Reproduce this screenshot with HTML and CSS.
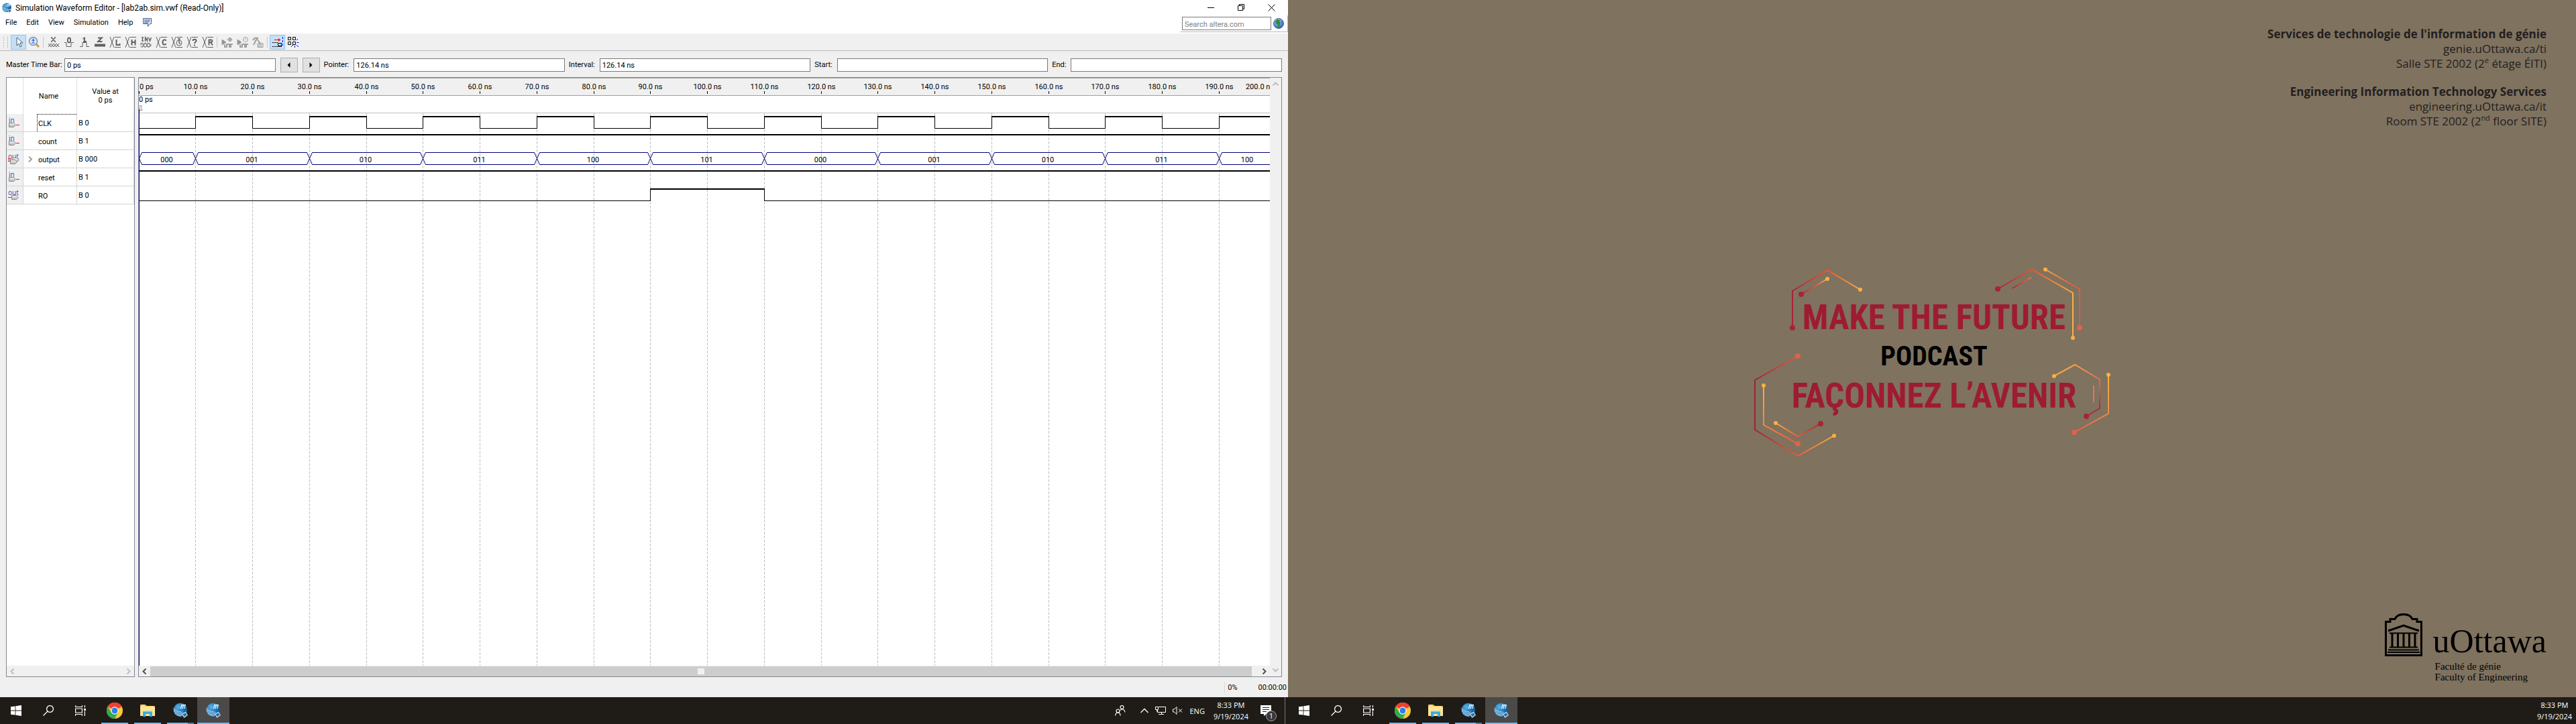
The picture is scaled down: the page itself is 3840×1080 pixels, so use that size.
FILE: index.html
```html
<!DOCTYPE html>
<html lang="en">
<head>
<meta charset="utf-8">
<title>Simulation Waveform Editor</title>
<link rel="stylesheet" href="styles.css">
</head>
<body>
<svg class="sprite" width="0" height="0" aria-hidden="true">
  <defs>
    <radialGradient id="ball" cx="35%" cy="30%" r="75%"><stop offset="0" stop-color="#5fb4e6"/><stop offset=".6" stop-color="#1573b4"/><stop offset="1" stop-color="#0c4a80"/></radialGradient>
    <radialGradient id="earth" cx="40%" cy="30%" r="70%"><stop offset="0" stop-color="#b9d4f7"/><stop offset="1" stop-color="#2c5fc0"/></radialGradient>
    <linearGradient id="pin" x1="0" y1="0" x2="0" y2="1"><stop offset="0" stop-color="#f4f4f4"/><stop offset="1" stop-color="#b4b4b4"/></linearGradient>
  </defs>
  <symbol id="i-quartus" viewBox="0 0 24 24">
    <circle cx="12" cy="11" r="10.300" fill="url(#ball)"/>
    <path d="M12.500 9l1.500-5M15 9l1.500-5M18 9l1-5M13 3.700h7" stroke="#fff" stroke-width="1.200" fill="none"/>
    <path d="M1.500 8.500c4 4 8 5.500 14 6M1.500 10.700c4 4 8 5.500 13 5.800M2 13c4 4 7 5 12 5.500M3.500 16c3 3 6 4 10 4" stroke="#e8f2fa" stroke-width=".9" fill="none"/>
    <path d="M13.500 17l6.500-3.500 3 5.500-5.500 4z" fill="#c3ced8"/><path d="M15.500 17.500l4-2 2 3-3.500 2.500z" fill="#1573b4"/>
  </symbol>
  <symbol id="i-win" viewBox="0 0 16 16"><path fill="#fff" d="M0 2.300L6.600 1.400V7.600H0zM7.400 1.300L16 0V7.600H7.400zM0 8.400H6.600V14.600L0 13.700zM7.400 8.400H16V16L7.400 14.700z"/></symbol>
  <symbol id="i-search" viewBox="0 0 16 16"><g fill="none" stroke="#fff" stroke-width="1.300"><circle cx="10.500" cy="5.500" r="4.900"/><path d="M7 9L.5 15.500"/></g></symbol>
  <symbol id="i-view" viewBox="0 0 16 16"><g fill="none" stroke="#fff" stroke-width="1.200"><path d="M.6 .3V2.500H10.400V.3M.6 15.700V13.500H10.400V15.700M.6 5H10.400V11H.6zM14.300 0V3.500M14.300 9V16"/></g><path fill="#fff" d="M13 5h3v3h-3z"/></symbol>
  <symbol id="i-chrome" viewBox="0 0 24 24">
    <circle cx="12" cy="12" r="12" fill="#fcc934"/>
    <path d="M12 12L1.600 6A12 12 0 0 1 22.400 6z" fill="#ea4335"/><path d="M12 6.500H22.700A12 12 0 0 0 1.600 6z" fill="#ea4335"/>
    <path d="M1.600 6A12 12 0 0 0 12 24L17 14.500 7 14.800z" fill="#34a853"/>
    <circle cx="12" cy="12" r="5.700" fill="#fff"/><circle cx="12" cy="12" r="4.500" fill="#2f7de9"/>
  </symbol>
  <symbol id="i-folder" viewBox="0 0 22 20"><path fill="#f3b93a" d="M0 1h8l1.500 2H20v4H0z"/><path fill="#fff" d="M2 1.500h4v1H2z"/><path fill="#ffe694" d="M0 3.500H22V18H0z"/><path fill="#3aa9e0" d="M4 11h14v8h-4v-4H8v4H4z"/><path fill="#7ccbf0" d="M4 10.500h14v1.500H4z"/></symbol>
  <symbol id="i-in" viewBox="0 0 18 20"><path d="M1.500 11.500h7l3 3-3 3h-7z" fill="url(#pin)" stroke="#8a8a8a"/><path d="M12 14.500h5" stroke="#e02020"/></symbol>
  <symbol id="i-out" viewBox="0 0 18 20"><path d="M5.500 11.500h7l3 3-3 3h-7z" fill="url(#pin)" stroke="#8a8a8a"/><path d="M0 14.500h5" stroke="#e02020"/></symbol>
  <symbol id="i-bus" viewBox="0 0 18 20"><path d="M6.500 9.500h7l3 3-3 3h-7z" fill="url(#pin)" stroke="#8a8a8a"/><path d="M3.500 12.500h7l3 3-3 3h-7z" fill="url(#pin)" stroke="#8a8a8a"/><path d="M0 10.500h5M0 12.500h4M0 14.500h3" stroke="#e02020"/></symbol>
</svg>

<section class="monitor">
  <main class="window">
    <header class="titlebar">
      <svg width="16" height="16"><use href="#i-quartus"/></svg>
      <h1>Simulation Waveform Editor - [lab2ab.sim.vwf (Read-Only)]</h1>
      <button aria-label="Minimize"><svg width="11" height="11"><path d="M0 5.500h10" stroke="#000"/></svg></button>
      <button aria-label="Restore"><svg width="11" height="11"><path d="M.5 2.500h7v7h-7zM2.500 2.500v-2h7v7h-2" fill="none" stroke="#000"/></svg></button>
      <button aria-label="Close"><svg width="11" height="11"><path d="M.5 .5l10 10M10.500 .5l-10 10" stroke="#000"/></svg></button>
    </header>

    <nav class="menubar">
      <button>File</button><button>Edit</button><button>View</button><button>Simulation</button><button>Help</button>
      <button aria-label="Feedback"><svg width="15" height="14"><path d="M1.500 .5h12v8h-2l-3 4v-4h-7z" fill="#dce8f8" stroke="#4a5f8c"/><path d="M3 3h9M3 5h8M3 7h6" stroke="#4a5f8c"/></svg></button>
      <form class="search">
        <input type="search" aria-label="Search altera.com" placeholder="Search altera.com">
        <button type="button" aria-label="Search the web"><svg width="16" height="16"><circle cx="8" cy="8" r="7.500" fill="url(#earth)" stroke="#3a5fa8"/><path d="M3 5l3-3 4 1-1 2 2 1-1 3-1 4-2 1V10L4 8z" fill="#2f8a3a"/><path d="M12 4l2 2-1 2z" fill="#2f8a3a"/></svg></button>
      </form>
    </nav>

    <div class="toolbar">
      <span class="grip"></span>
      <button class="on" aria-label="Select"><svg width="18" height="18"><path d="M6 2v12l3-3 2 5 2-1-2-5h4z" fill="#fff" stroke="#4a5a70"/></svg></button>
      <button aria-label="Zoom"><svg width="18" height="18"><path d="M11.500 11.500l4.500 4.500" stroke="#d69a3c" stroke-width="3"/><circle cx="7.500" cy="7.500" r="6" fill="#dcebfa" stroke="#6d92c4" stroke-width="1.500"/><path d="M5 6h5M7.500 3.500v5M5 10h5" stroke="#2544b0"/></svg></button>
      <i></i>
      <button aria-label="Force unknown"><svg width="18" height="18"><path d="M5.500 2l6 6M11.500 2l-6 6M5 2h2M10 2h2M5 8h2M10 8h2" stroke-width="1.500"/><path d="M1 11l4 5 4-5 4 5 4-5M1 16l4-5 4 5 4-5 4 5"/></svg></button>
      <button aria-label="Force low"><svg width="18" height="18"><path d="M2 9.500h3v6h7v-6h4"/><ellipse cx="9" cy="6" rx="2.200" ry="3.500" stroke-width="1.800"/></svg></button>
      <button aria-label="Force high"><svg width="18" height="18"><path d="M2 15.500h4v-6h6v6h4"/><path d="M6.500 4l2.500-1.500V8M7 8h5" stroke-width="1.800"/></svg></button>
      <button aria-label="High impedance"><svg width="18" height="18"><path d="M6 2.500h6l-6 5.500h6.500" stroke-width="1.800"/><path d="M1 13.500h16" stroke-width="4"/></svg></button>
      <button aria-label="Weak low"><svg width="18" height="18"><path d="M1 1l6 16M7 1L1 17M17 1.500H8M17 16.500H8"/><path d="M10.500 5v8h5v-2" stroke-width="2"/></svg></button>
      <button aria-label="Weak high"><svg width="18" height="18"><path d="M1 1l6 16M7 1L1 17M17 1.500H8M17 16.500H8"/><path d="M10.500 5v8.500M15.500 5v8.500M10 9h6" stroke-width="2"/></svg></button>
      <button aria-label="Invert"><svg width="18" height="18"><path d="M3.500 1.500v6M2 2h3M2 7h3M7.500 8V2l3 5V1.500M12.500 2l2 5 2-5" stroke-width="1.400"/><path d="M1 14v-3.500h3V13h2v-2.500h3V13h2v-2.500h3V13h3M1 16h3v-1.500h2V16h3v-1.500h2V16h3v-1.500h2"/></svg></button>
      <button aria-label="Count value"><svg width="18" height="18"><path d="M1 1l6 16M7 1L1 17M17 1.500H8M17 16.500H8"/><path d="M15.500 7c-1-2.500-5-2.500-5 2s4 4.500 5 2" stroke-width="2"/></svg></button>
      <button aria-label="Overwrite clock"><svg width="18" height="18"><path d="M1 1l6 16M7 1L1 17M17 1.500H8M17 16.500H8"/><circle cx="12" cy="10" r="4"/><path d="M12 3.500V10l2 1.500M10 4h4" stroke-width="1.500"/></svg></button>
      <button aria-label="Arbitrary value"><svg width="18" height="18"><path d="M1 1l6 16M7 1L1 17M17 1.500H8M17 16.500H8"/><path d="M9.500 7c0-3 5-3 5 0 0 2-2.500 1.500-2.500 4M12 12.500v2" stroke-width="2"/></svg></button>
      <button aria-label="Random values"><svg width="18" height="18"><path d="M1 1l6 16M7 1L1 17M17 1.500H8M17 16.500H8"/><path d="M10.500 13.500V5.500h3c2.500 0 2.500 3.500 0 3.500h-2.500M13 9l3 4.500" stroke-width="1.800"/></svg></button>
      <i></i>
      <button aria-label="Functional simulation" disabled><svg width="18" height="18"><path d="M1 5l6 4-6 4z" fill="#909090"/><path d="M8 5h3M11 2.500v5h3l2-2.500-2-2.500z" fill="#b0b0b0"/><path d="M5 12v4h3v-4h4v4h2v-4h3" stroke-width="2"/></svg></button>
      <button aria-label="Timing simulation" disabled><svg width="18" height="18"><path d="M1 5l6 4-6 4z" fill="#909090"/><circle cx="13" cy="5" r="3.500"/><path d="M13 3v2.500"/><path d="M5 12v4h3v-4h4v4h2v-4h3" stroke-width="2"/></svg></button>
      <button aria-label="Generate testbench" disabled><svg width="18" height="18"><path d="M1 6c2-4 5-4 8-3M6 3l7 9M2 13l4-8" stroke-width="2"/><path d="M8 10.500h8v6H8zM10 16v-4h3v4" fill="#ddd"/></svg></button>
      <i></i>
      <button class="on" aria-label="Snap to transition"><svg width="18" height="18"><path d="M4 5.500h9" stroke="#f00"/><path d="M10 3l3 2.500L10 8z" fill="#f00" stroke="none"/><path d="M1 9.500h8M1 15.500h15" stroke="#000" stroke-dasharray="2 1"/><path d="M9.500 10.500h5v4h-5z" stroke="#000"/><path d="M16.500 1v15" stroke="#00f" stroke-dasharray="3 2"/></svg></button>
      <button aria-label="Snap to grid"><svg width="18" height="18"><path d="M1.500 1.500h4v4h-4zM8.500 1.500h4v4h-4zM1.500 8.500h4v4h-4zM8.500 8.500h4v4h-4z" stroke="#000" stroke-width="1"/><path d="M14 6l2-2M14.500 9.500h3M14 13l3 3M11.500 14v3M9 13l-3 3" stroke="#00f"/></svg></button>
    </div>

    <div class="workspace">
      <form class="timebar">
        <label for="master">Master Time Bar:</label><input id="master" value="0 ps">
        <button type="button" aria-label="Previous transition"><svg width="5" height="8"><path d="M4.500 0v8L.5 4z"/></svg></button>
        <button type="button" aria-label="Next transition"><svg width="5" height="8"><path d="M.5 0v8l4-4z"/></svg></button>
        <label for="pointer">Pointer:</label><input id="pointer" value="126.14 ns">
        <label for="interval">Interval:</label><input id="interval" value="126.14 ns">
        <label for="start">Start:</label><input id="start">
        <label for="end">End:</label><input id="end">
      </form>

      <div class="panes">
        <section class="pane signals">
          <table>
            <thead><tr><th class="dir"></th><th class="name">Name</th><th class="value">Value at<br>0 ps</th></tr></thead>
            <tbody>
              <tr><td class="dir"><svg width="18" height="22"><text x="1" y="11">in</text><use href="#i-in" width="18" height="20"/></svg></td><td class="name"><span class="focused">CLK</span></td><td class="value">B 0</td></tr>
              <tr><td class="dir"><svg width="18" height="22"><text x="1" y="11">in</text><use href="#i-in" width="18" height="20"/></svg></td><td class="name"><span>count</span></td><td class="value">B 1</td></tr>
              <tr><td class="dir"><svg width="18" height="22"><text x="0" y="11">out</text><use href="#i-bus" width="18" height="20"/></svg></td><td class="name bus"><svg class="expander" width="7" height="9"><path d="M1 .5l4 4-4 4"/></svg><span>output</span></td><td class="value">B 000</td></tr>
              <tr><td class="dir"><svg width="18" height="22"><text x="1" y="11">in</text><use href="#i-in" width="18" height="20"/></svg></td><td class="name"><span>reset</span></td><td class="value">B 1</td></tr>
              <tr><td class="dir"><svg width="18" height="22"><text x="0" y="11">out</text><use href="#i-out" width="18" height="20"/></svg></td><td class="name"><span>RO</span></td><td class="value">B 0</td></tr>
            </tbody>
          </table>
          <div class="hscroll off">
            <svg width="7" height="9"><path d="M5.500 .5l-4 4 4 4"/></svg>
            <svg width="7" height="9"><path d="M1.500 .5l4 4-4 4"/></svg>
          </div>
        </section>

        <section class="pane waves">
          <div class="plot">
            <svg id="chart" width="100%" height="100%"></svg>
            <div class="hscroll">
              <svg width="7" height="9"><path d="M5.500 .5l-4 4 4 4"/></svg>
              <div class="thumb"><span></span></div>
              <svg width="7" height="9"><path d="M1.500 .5l4 4-4 4"/></svg>
            </div>
          </div>
          <div class="vscroll">
            <svg width="9" height="7"><path d="M.5 5.500l4-4 4 4"/></svg>
            <svg width="9" height="7"><path d="M.5 1.500l4 4 4-4"/></svg>
          </div>
        </section>
      </div>
    </div>

    <footer class="statusbar"><span>0%</span><span>00:00:00</span></footer>
  </main>

  <footer class="taskbar">
    <button aria-label="Start"><svg width="16" height="16"><use href="#i-win"/></svg></button>
    <button aria-label="Search"><svg width="16" height="16"><use href="#i-search"/></svg></button>
    <button aria-label="Task View"><svg width="16" height="16"><use href="#i-view"/></svg></button>
    <div class="apps">
      <button class="open" aria-label="Google Chrome"><svg width="24" height="24"><use href="#i-chrome"/></svg></button>
      <button class="open" aria-label="File Explorer"><svg width="22" height="20"><use href="#i-folder"/></svg></button>
      <button class="open many" aria-label="Quartus"><svg width="24" height="24"><use href="#i-quartus"/></svg></button>
      <button class="active" aria-label="Simulation Waveform Editor"><svg width="24" height="24"><use href="#i-quartus"/></svg></button>
    </div>
    <div class="tray">
      <svg width="16" height="16"><g fill="none" stroke="#fff" stroke-width="1.200"><circle cx="10.500" cy="3" r="2.500"/><circle cx="4.500" cy="8.500" r="2.500"/><path d="M.7 15.500c.5-6 7-6 7.500 0M8 7.500c3-3 6.500-1.500 7 3"/></g></svg>
      <svg width="12" height="8"><path d="M.5 7l5.500-5.500L11.500 7" fill="none" stroke="#fff" stroke-width="1.300"/></svg>
      <svg width="16" height="14"><g fill="none" stroke="#fff"><path d="M5 1.500h10.500v8H3.500V6M9.500 9.500v3M5 12.500h8M.5 1.500h4v4h-4zM2.500 5.500v3"/></g></svg>
      <svg width="15" height="12"><g fill="none" stroke="#fff"><path d="M.5 4v4h2l3.500 3.500v-11L2.500 4zM9 3.500l5 5M14 3.500l-5 5"/></g></svg>
      <span>ENG</span>
      <time>8:33 PM<br>9/19/2024</time>
      <span class="notes"><svg width="16" height="16"><path fill="#fff" d="M0 0h16v13H9l-4 3v-3H0z"/><path d="M3 3.500h10M3 6.500h10M3 9.500h6" stroke="#1f1c18"/></svg><b>1</b></span>
      <span class="peek"></span>
    </div>
  </footer>
</section>

<section class="monitor">
  <div class="wallpaper">
    <address>
      <p><strong>Services de technologie de l'information de génie</strong><br>genie.uOttawa.ca/ti<br>Salle STE 2002 (2<sup>e</sup> étage ÉITI)</p>
      <p><strong>Engineering Information Technology Services</strong><br>engineering.uOttawa.ca/it<br>Room STE 2002 (2<sup>nd</sup> floor SITE)</p>
    </address>

    <svg class="podcast" width="560" height="320" viewBox="0 0 560 320">
      <defs>
        <linearGradient id="g1" gradientUnits="userSpaceOnUse" x1="72" y1="0" x2="173" y2="0"><stop offset="0" stop-color="#a82338"/><stop offset=".5" stop-color="#f05030"/><stop offset="1" stop-color="#fbb040"/></linearGradient>
        <linearGradient id="g2" gradientUnits="userSpaceOnUse" x1="85" y1="0" x2="124" y2="0"><stop offset="0" stop-color="#a82338"/><stop offset=".6" stop-color="#e85a3c"/><stop offset="1" stop-color="#fbb860"/></linearGradient>
        <linearGradient id="g3" gradientUnits="userSpaceOnUse" x1="378" y1="0" x2="490" y2="0"><stop offset="0" stop-color="#a82338"/><stop offset=".5" stop-color="#f05a35"/><stop offset="1" stop-color="#fbb040"/></linearGradient>
        <linearGradient id="g4" gradientUnits="userSpaceOnUse" x1="449" y1="22" x2="500" y2="70"><stop offset="0" stop-color="#fbb040"/><stop offset=".6" stop-color="#e8603c"/><stop offset="1" stop-color="#d45a50"/></linearGradient>
        <linearGradient id="g5" gradientUnits="userSpaceOnUse" x1="16" y1="0" x2="134" y2="0"><stop offset="0" stop-color="#a02038"/><stop offset=".5" stop-color="#e8553a"/><stop offset="1" stop-color="#fbb040"/></linearGradient>
        <linearGradient id="g6" gradientUnits="userSpaceOnUse" x1="29" y1="195" x2="80" y2="282"><stop offset="0" stop-color="#fbb040"/><stop offset="1" stop-color="#e85a3c"/></linearGradient>
        <linearGradient id="g7" gradientUnits="userSpaceOnUse" x1="47" y1="0" x2="114" y2="0"><stop offset="0" stop-color="#fbb040"/><stop offset=".5" stop-color="#e85a3c"/><stop offset="1" stop-color="#a82338"/></linearGradient>
        <linearGradient id="g8" gradientUnits="userSpaceOnUse" x1="470" y1="165" x2="520" y2="240"><stop offset="0" stop-color="#fbb040"/><stop offset=".6" stop-color="#e06a50"/><stop offset="1" stop-color="#a82338"/></linearGradient>
        <linearGradient id="g9" gradientUnits="userSpaceOnUse" x1="543" y1="179" x2="500" y2="265"><stop offset="0" stop-color="#fbb040"/><stop offset="1" stop-color="#e0624a"/></linearGradient>
      </defs>
      <g fill="none" stroke-width="2">
        <path stroke="url(#g1)" d="M72 109V54l52-31 49 29"/>
        <path stroke="url(#g2)" d="M85 59l39-23"/>
        <path stroke="url(#g3)" d="M378 51l51-29 61 35v67"/>
        <path stroke="url(#g2)" transform="translate(314 -1)" d="M86 51l28-16"/>
        <path stroke="url(#g4)" d="M449 22l51 29v58"/>
        <path stroke="url(#g5)" d="M80 151l-64 36v74l64 39 54-30"/>
        <path stroke="url(#g6)" d="M29 195v59l51 28"/>
        <path stroke="url(#g7)" d="M47 251l33 20 34-19"/>
        <path stroke="url(#g8)" d="M462 181l31-17 37 22v43l-20 12"/>
        <path stroke="url(#g9)" d="M543 179v58l-51 28"/>
        <path stroke="#e8764a" d="M521 195v25"/>
      </g>
      <g fill="#a82338"><circle cx="72" cy="109" r="4"/><circle cx="85" cy="59" r="4"/><circle cx="378" cy="51" r="4"/><circle cx="114" cy="252" r="4"/><circle cx="510" cy="241" r="4"/></g>
      <g fill="#e0624a"><circle cx="500" cy="109" r="4"/><circle cx="80" cy="151" r="4"/><circle cx="80" cy="282" r="4"/><circle cx="492" cy="265" r="4"/></g>
      <g fill="#fbb040"><circle cx="124" cy="36" r="3"/><circle cx="173" cy="52" r="3"/><circle cx="449" cy="22" r="3"/><circle cx="490" cy="124" r="3"/><circle cx="29" cy="195" r="3"/><circle cx="47" cy="251" r="3"/><circle cx="134" cy="270" r="3"/><circle cx="462" cy="181" r="3"/><circle cx="543" cy="179" r="3"/></g>
      <g class="slogan" text-anchor="middle">
        <text x="283" y="111">MAKE THE FUTURE</text>
        <text class="small" x="283" y="165">PODCAST</text>
        <text x="283" y="228">FAÇONNEZ L’AVENIR</text>
      </g>
    </svg>

    <div class="brand">
      <svg width="56" height="64" fill="none" stroke="#000"><path stroke-width="3" d="M1.500 62.500V12.500H8V8.500h7C19 -1 37 -1 41 8.500h7v4h6.500v50z"/><path stroke-width="3" d="M5 26l23-8 23 8"/><path stroke-width="2" d="M7 29.500h42M7 50.500h42M5 54.500h46M4 58h48"/><path stroke-width="3" d="M11 30v20M19.500 30v20M28 30v20M36.500 30v20M45 30v20"/></svg>
      <div>
        <p class="uottawa">uOttawa</p>
        <p class="faculty">Faculté de génie<br>Faculty of Engineering</p>
      </div>
    </div>
  </div>

  <footer class="taskbar">
    <button aria-label="Start"><svg width="16" height="16"><use href="#i-win"/></svg></button>
    <button aria-label="Search"><svg width="16" height="16"><use href="#i-search"/></svg></button>
    <button aria-label="Task View"><svg width="16" height="16"><use href="#i-view"/></svg></button>
    <div class="apps">
      <button class="open" aria-label="Google Chrome"><svg width="24" height="24"><use href="#i-chrome"/></svg></button>
      <button class="open" aria-label="File Explorer"><svg width="22" height="20"><use href="#i-folder"/></svg></button>
      <button class="open many" aria-label="Quartus"><svg width="24" height="24"><use href="#i-quartus"/></svg></button>
      <button class="active" aria-label="Simulation Waveform Editor"><svg width="24" height="24"><use href="#i-quartus"/></svg></button>
    </div>
    <div class="tray"><time class="last">8:33 PM<br>9/19/2024</time></div>
  </footer>
</section>
<script src="waveform.js"></script>
</body>
</html>
```

FILE: styles.css
```css
* { box-sizing: border-box; }

body {
  display: flex;
  margin: 0;
  min-height: 100vh;
  background: #7f725f;
  color: #000;
  font: 11px/13px Roboto, "Liberation Sans", sans-serif;
}

h1, p { margin: 0; }
svg { display: block; flex: none; }
.sprite { position: absolute; }

button {
  display: flex;
  align-items: center;
  justify-content: center;
  margin: 0;
  padding: 0;
  border: 0;
  background: none;
  color: inherit;
  font: inherit;
}

input {
  min-width: 0;
  height: 20px;
  padding: 2px 3px 0;
  border: 1px solid #7a7a7a;
  border-radius: 0;
  background: #fff;
  color: #000;
  font: inherit;
  appearance: none;
}

.monitor { display: flex; flex: 1; flex-direction: column; min-width: 0; }
.window { display: flex; flex: 1; flex-direction: column; background: #f0f0f0; }

/* Title and menu */
.titlebar { display: flex; align-items: center; height: 23px; padding: 0 2px; background: #fff; }
.titlebar h1 { flex: 1; padding-left: 5px; font: 12px/16px Roboto, sans-serif; }
.titlebar button { width: 45px; height: 20px; }

.menubar { display: flex; height: 28px; padding: 0 0 2px 8px; border-bottom: 1px solid #f0f0f0; background: #fff; }
.menubar > button { height: 21px; margin-right: 14px; }
.search { display: flex; align-items: center; gap: 3px; margin-left: auto; padding: 0 5px 0 2px; border: solid #b8b8b8; border-width: 0 1px 1px 0; }
.search input { width: 133px; }
.search input::placeholder { color: #808080; opacity: 1; }

/* Toolbar */
.toolbar { display: flex; align-items: center; height: 25px; border-bottom: 1px solid #b8b8b8; }
.toolbar button { width: 23px; height: 22px; border: 1px solid transparent; }
.toolbar button svg { fill: none; stroke: #606060; }
.toolbar button:disabled svg { stroke: #a0a0a0; }
.toolbar button.on { border-color: #90c8f6; background: #c5dff5; }
.toolbar i { width: 4px; height: 16px; margin-left: 2px; border-left: 1px solid #c8c8c8; }
.grip { width: 8px; height: 18px; margin: 0 4px; border-right: 1px solid #c8c8c8; background: radial-gradient(circle, #b4b4b4 1px, transparent 1px) 0 0 / 3px 4px repeat-y; }

/* Time fields */
.workspace { display: flex; flex: 1; flex-direction: column; padding: 0 9px; }
.timebar { display: flex; align-items: center; height: 39px; padding-top: 2px; }
.timebar input { flex: 1; }
.timebar label { flex: none; padding: 0 7px 0 6px; white-space: nowrap; }
.timebar label:first-child { width: 87px; padding-left: 0; }
.timebar button { width: 26px; height: 22px; margin-left: 7px; border: 1px solid #adadad; background: #e1e1e1; }

/* Panes */
.panes { display: flex; flex: 1; gap: 5px; }
.pane { display: flex; border: 1px solid #828790; background: #fff; }
.signals { flex: none; flex-direction: column; justify-content: space-between; width: 192px; }
.waves { flex: 1; min-width: 0; }
.plot { display: flex; flex: 1; flex-direction: column; min-width: 0; }
#chart { flex: 1; min-height: 0; overflow: hidden; }

table { width: 100%; border-collapse: separate; border-spacing: 0; table-layout: fixed; }
th { height: 54px; padding: 0; border-right: 1px solid #e0e0e0; font-weight: normal; }
td { height: 27px; padding: 0 0 0 2px; border: solid #d4d4d4; border-width: 0 1px 1px 0; }
.dir { width: 25px; }
.name { width: 80px; }
th.name { padding-right: 4px; }
td.dir { background: #f0f0f0; }
td.name { padding-left: 20px; }
td.name span { display: block; height: 26px; padding-left: 1px; line-height: 27px; border: 1px dotted transparent; border-width: 1px 0 0 1px; }
td.name .focused { border-color: #000; }
td.bus { position: relative; }
.expander { position: absolute; left: 7px; top: 9px; fill: none; stroke: #a0a0a0; stroke-width: 2; }
.dir svg { overflow: visible; }
.dir text { fill: #2a4fb0; font: 10px "Open Sans", sans-serif; }

.hscroll { display: flex; align-items: center; justify-content: space-between; height: 16px; padding: 0 5px; background: #f0f0f0; fill: none; stroke: #505050; stroke-width: 2; }
.off, .vscroll { stroke: #bfbfbf; stroke-width: 2; fill: none; }
.thumb { flex: 1; height: 15px; margin: 0 15px 0 5px; padding-top: 3px; background: #cdcdcd; }
.thumb span { display: block; width: 10px; height: 9px; margin: 0 auto; background: #f0f0f0; }
.vscroll { display: flex; flex-direction: column; justify-content: space-between; align-items: center; width: 17px; padding: 6px 0; background: #f0f0f0; }

/* Waveform drawing */
.ruler { fill: #f0f0f0; }
.edge { stroke: #a0a0a0; }
.rule { stroke: #c0c0c0; }
.grid { stroke: #c0c0c0; stroke-dasharray: 4 2; }
.tick, .low, .high { stroke: #000; fill: none; }
.high { stroke-width: 2; }
.bus-line { fill: none; stroke: #00007f; }
.cursor { stroke: #0000c8; }
.handle { fill: #f0f0f0; stroke: #a0a0a0; }

.statusbar { display: flex; align-items: center; justify-content: flex-end; gap: 31px; height: 30px; padding-right: 2px; }
.statusbar span:first-child { padding: 2px 0 2px 4px; border-left: 1px solid #d7d7d7; }

/* Taskbar */
.taskbar { display: flex; height: 40px; background: #1f1c18; color: #fff; font: 11px/17px "Open Sans", "Noto Sans", sans-serif; }
.taskbar button { width: 48px; height: 40px; }
.apps { display: flex; gap: 1px; margin-left: 3px; }
.taskbar .open { background: linear-gradient(#76b9ed, #76b9ed) center bottom / 40px 2px no-repeat; }
.taskbar .many { background: linear-gradient(to right, #76b9ed 31px, #4a7ba8 31px) center bottom / 40px 2px no-repeat; }
.taskbar .active { border-bottom: 2px solid #76b9ed; padding-top: 2px; background: #4c4a48; }
.tray { display: flex; align-items: center; gap: 10px; margin-left: auto; }
.tray > svg:first-child { margin-right: 12px; }
.tray time { text-align: center; }
.tray .last { padding-right: 6px; }
.tray > svg + span { margin-right: 3px; }
.notes { position: relative; margin-left: 8px; }
.notes b { position: absolute; left: 8px; top: 8px; width: 16px; height: 16px; border: 1px solid #a0a0a0; border-radius: 8px; background: #3a3835; font-weight: normal; line-height: 14px; text-align: center; }
.peek { width: 5px; height: 40px; margin-left: 10px; border-left: 1px solid #777; }

/* Desktop of the second monitor */
.wallpaper { display: grid; flex: 1; grid-template-rows: 1fr auto 1fr; padding: 40px 44px 0; }
.wallpaper address { color: #231f20; font: 17px/22px "Open Sans", "Noto Sans", sans-serif; text-align: right; }
.wallpaper address p + p { margin-top: 20px; }
sup { font-size: 11px; line-height: 0; }
.podcast { justify-self: center; }
.slogan { fill: #9e1b32; font: bold 51px "Liberation Sans Narrow", "Roboto Condensed", Roboto, sans-serif; }
.slogan .small { fill: #000; font-size: 40px; }
.brand { display: flex; gap: 16px; align-self: end; justify-self: end; padding-bottom: 22px; font-family: "Liberation Serif", serif; color: #000; }
.uottawa { height: 71px; font-size: 50px; line-height: 82px; }
.faculty { padding-left: 3px; font-size: 15px; line-height: 16px; }
```

FILE: waveform.js
```js
const chart = document.getElementById("chart");
const STEP = 84.75; // pixels in 10 ns
const at = (tens) => Math.floor(STEP * tens) + 0.5;

function add(tag, cls, attrs, text) {
  const el = document.createElementNS("http://www.w3.org/2000/svg", tag);
  if (cls) el.setAttribute("class", cls);
  for (const key in attrs) el.setAttribute(key, attrs[key]);
  if (text) el.textContent = text;
  chart.appendChild(el);
}
const line = (cls, x1, y1, x2, y2) => add("line", cls, { x1, y1, x2, y2 });
const label = (x, y, text, anchor = "middle") => add("text", "", { x, y, "text-anchor": anchor }, text);

// Time ruler and grid
add("rect", "ruler", { width: "100%", height: 26 });
line("edge", 0, 0.5, "100%", 0.5);
line("edge", 0, 26.5, "100%", 26.5);
line("rule", 0, 52.5, "100%", 52.5);
label(1, 17, "0 ps", "start");
label(0, 36, "0 ps", "start");
line("tick", 0.5, 20, 0.5, 24);
for (let i = 1; i < 20; i++) {
  label(at(i), 17, (i * 10).toFixed(1) + " ns");
  line("tick", at(i), 20, at(i), 24);
  line("grid", at(i), 53, at(i), "100%");
}
label(1671, 17, "200.0 ns");

// One-bit signal: levels is a list of [start, end, level] in tens of ns
function bit(top, levels) {
  levels.forEach(([from, to, level], i) => {
    if (level) line("high", at(from) - 0.5, top + 1, at(to) + 0.5, top + 1);
    else line("low", at(from), top + 18.5, at(to), top + 18.5);
    if (i) line("low", at(from), top, at(from), top + 19);
  });
}

// Bus signal: edges in tens of ns, with the value after each
function bus(top, edges, values) {
  values.forEach((value, i) => {
    const a = at(edges[i]), b = at(edges[i + 1]), y = top + 0.5;
    add("path", "bus-line", { d: `M${a} ${y + 9}L${a + 4} ${y}H${b - 4}L${b} ${y + 9}L${b - 4} ${y + 18}H${a + 4}Z` });
    label((a + b) / 2 - 1, y + 14, value);
  });
}

const clock = [];
for (let i = 0; i < 20; i++) clock.push([i, i + 1, i % 2]);
bit(57, clock);
bit(84, [[0, 20, 1]]);
bus(111, [0, 1, 3, 5, 7, 9, 11, 13, 15, 17, 19, 20], ["000", "001", "010", "011", "100", "101", "000", "001", "010", "011", "100"]);
bit(138, [[0, 20, 1]]);
bit(165, [[0, 9, 0], [9, 11, 1], [11, 20, 0]]);

// Master time bar
add("path", "handle", { d: "M1 41.500h3v6h1v1H1z" });
line("cursor", 0.5, 47, 0.5, "100%");
```
